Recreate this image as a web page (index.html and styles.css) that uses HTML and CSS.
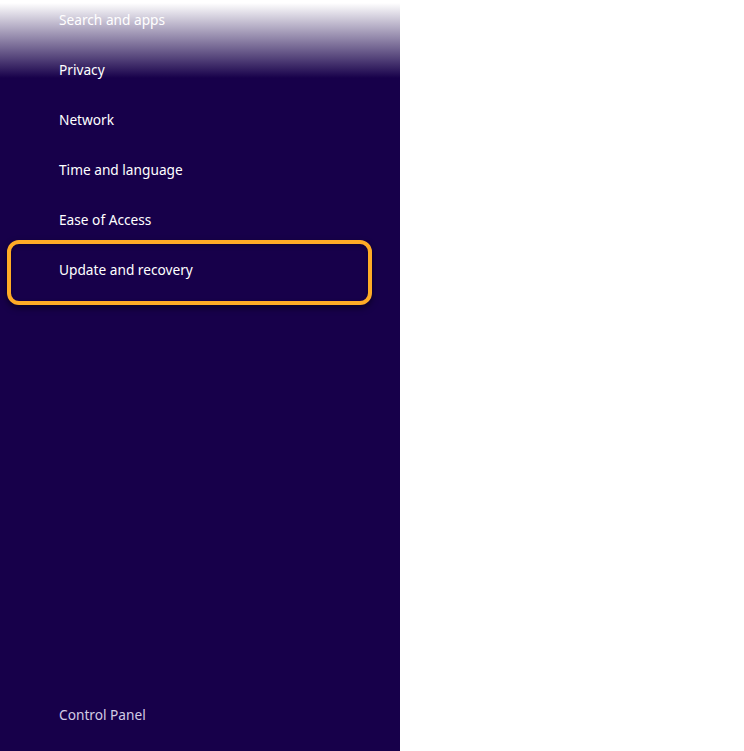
FILE: index.html
```html
<!DOCTYPE html>
<html>
<head>
<meta charset="utf-8">
<link rel="stylesheet" href="styles.css">
</head>
<body>
<nav class="panel">
  <div class="fade"></div>
  <ul class="menu">
    <li class="item">Search and apps</li>
    <li class="item">Privacy</li>
    <li class="item">Network</li>
    <li class="item">Time and language</li>
    <li class="item">Ease of Access</li>
    <li class="item item-focus">Update and recovery</li>
  </ul>
  <div class="footer">Control Panel</div>
</nav>
</body>
</html>
```
FILE: styles.css
```css
html, body {
  margin: 0;
  padding: 0;
  background: #ffffff;
  height: 100%;
}
body {
  font-family: "Noto Sans", "Open Sans", "DejaVu Sans", sans-serif;
}
.panel {
  position: relative;
  width: 400px;
  height: 751px;
  background: #17004a;
  display: flex;
  flex-direction: column;
  overflow: hidden;
}
.fade {
  position: absolute;
  left: 0;
  top: 0;
  width: 100%;
  height: 80px;
  background: linear-gradient(to bottom, #ffffff 0px, #ffffff 3px, #17004a 78px);
  pointer-events: none;
}
.menu {
  position: relative;
  list-style: none;
  margin: -5px 0 0 0;
  padding: 0;
}
.item {
  position: relative;
  height: 50px;
  line-height: 50px;
  padding-left: 59px;
  font-size: 13.7px;
  color: #ffffff;
}
.item-focus::before {
  content: "";
  position: absolute;
  left: 7px;
  top: -5px;
  width: 365px;
  height: 65px;
  box-sizing: border-box;
  border: 4.5px solid #ffab26;
  border-radius: 12px;
  box-shadow: 0 3px 6px rgba(0, 0, 0, 0.5), inset 0 2px 4px rgba(0, 0, 0, 0.3);
}
.footer {
  margin-top: auto;
  height: 50px;
  line-height: 50px;
  margin-bottom: 11px;
  padding-left: 59px;
  font-size: 13.7px;
  color: #d2cce4;
}
```
